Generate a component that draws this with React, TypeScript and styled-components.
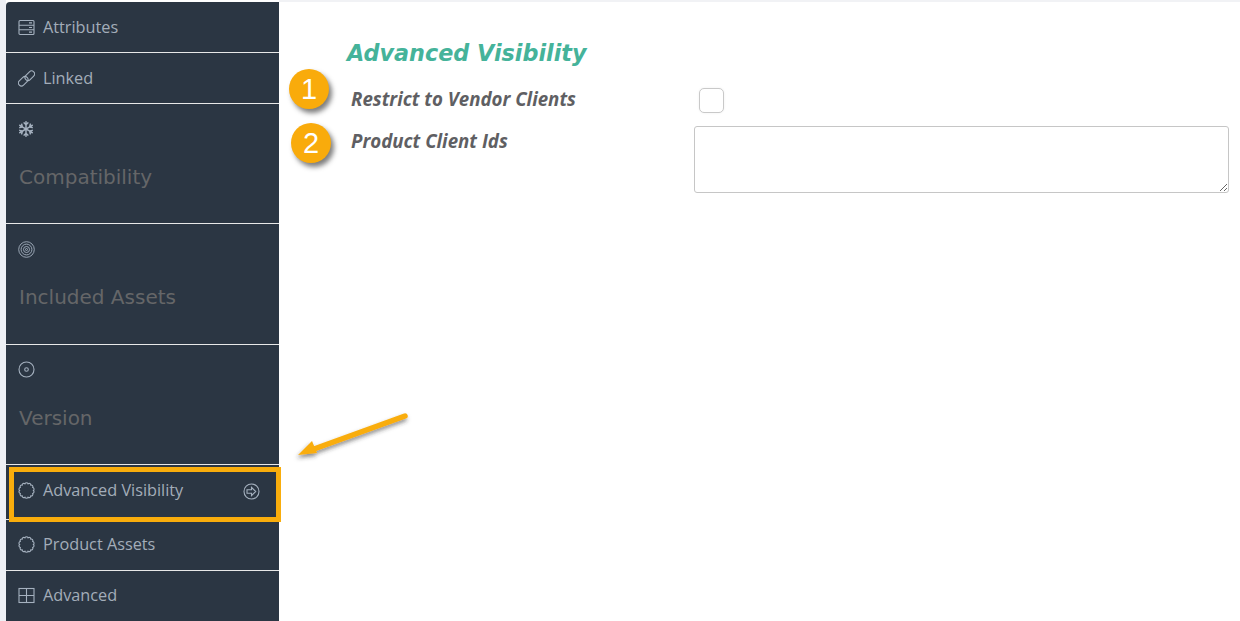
import * as React from "react";
import styled, { createGlobalStyle } from "styled-components";
import { FaRegSnowflake } from "react-icons/fa";

const GlobalStyle = createGlobalStyle`
  html, body {
    margin: 0;
    padding: 0;
    height: 100%;
    background: #fff;
  }
  #root {
    height: 100%;
  }
`;

const Page = styled.div`
  position: relative;
  display: flex;
  width: 1240px;
  height: 621px;
  overflow: hidden;
  background: #fff;
`;

const Gutter = styled.div`
  width: 6px;
  flex: none;
  background: #eef0f5;
`;

const Sidebar = styled.nav`
  width: 273px;
  flex: none;
  margin-top: 2px;
  display: flex;
  flex-direction: column;
  background: #2b3643;
  border-top-left-radius: 4px;
`;

const NavItem = styled.div<{ $height: number; $last?: boolean }>`
  height: ${(p) => p.$height}px;
  flex: none;
  box-sizing: border-box;
  padding: 0 12px 0 12px;
  border-bottom: ${(p) => (p.$last ? "none" : "1px solid #e8e8e8")};
`;

const NavRow = styled.div<{ $top: number }>`
  display: flex;
  align-items: center;
  height: 20px;
  padding-top: ${(p) => p.$top}px;
  color: #a5b1bf;
`;

const NavLabel = styled.span`
  margin-left: 8px;
  font-family: "Open Sans", sans-serif;
  font-size: 16.25px;
  line-height: 20px;
  color: #a3adb9;
  flex: 1;
`;

const DimLabel = styled.div<{ $top: number }>`
  margin-top: ${(p) => p.$top}px;
  margin-left: 1px;
  font-family: "DejaVu Sans", Verdana, sans-serif;
  font-size: 20px;
  line-height: 24px;
  color: #656668;
`;

const Main = styled.main`
  flex: 1;
  position: relative;
  border-top: 2px solid #f1f2f5;
  padding: 36px 11px 0 68px;
`;

const Heading = styled.h2`
  margin: 0;
  font-family: "DejaVu Sans", Verdana, sans-serif;
  font-size: 22.3px;
  line-height: 30px;
  font-style: italic;
  font-weight: 700;
  color: #45b39a;
`;

const FieldRow = styled.div<{ $top: number }>`
  display: flex;
  align-items: flex-start;
  margin-top: ${(p) => p.$top}px;
`;

const FieldLabel = styled.label<{ $top?: number }>`
  width: 343px;
  flex: none;
  margin-left: 4px;
  margin-top: ${(p) => p.$top ?? 0}px;
  font-family: "Open Sans", sans-serif;
  font-size: 18.7px;
  line-height: 24px;
  font-style: italic;
  font-weight: 700;
  color: #5f5f63;
`;

const CheckBox = styled.input.attrs({ type: "checkbox" })`
  appearance: none;
  width: 25px;
  height: 25px;
  margin: 1px 0 0 5px;
  box-sizing: border-box;
  border: 1px solid #c9c9c9;
  border-radius: 5px;
  background: #fff;
  box-shadow: 0 0 3px rgba(0, 0, 0, 0.06);
`;

const TextArea = styled.textarea`
  display: block;
  width: 535px;
  height: 67px;
  box-sizing: border-box;
  margin: 0;
  border: 1px solid #c6c6c6;
  border-radius: 3px;
  background: #fff;
  outline: none;
`;

const Highlight = styled.div`
  position: absolute;
  left: 9px;
  top: 467px;
  width: 272px;
  height: 55px;
  box-sizing: border-box;
  border: 5px solid #f9ad0c;
`;

const Badge = styled.div<{ $x: number; $y: number }>`
  position: absolute;
  left: ${(p) => p.$x}px;
  top: ${(p) => p.$y}px;
  width: 40px;
  height: 40px;
  border-radius: 50%;
  background: #f9ab0b;
  box-shadow: 3px 4px 5px rgba(40, 40, 40, 0.6);
  color: #fff;
  font-family: "Liberation Sans", Arial, sans-serif;
  font-size: 29px;
  line-height: 40px;
  text-align: center;
`;

const Arrow = styled.svg`
  position: absolute;
  left: 290px;
  top: 405px;
  overflow: visible;
`;

const Ico = styled.svg`
  width: 17px;
  height: 17px;
  flex: none;
  fill: none;
  stroke: #a5b1bf;
  stroke-width: 1.1;
`;

const ThinIco = styled(Ico)`
  stroke-width: 0.9;
`;

const ArrowIco = styled(Ico)`
  margin-right: 7px;
  margin-top: 2px;
`;

const Snow = styled(FaRegSnowflake)`
  width: 16px;
  height: 16px;
  flex: none;
  color: #a5b1bf;
`;

const ServerIcon = () => (
  <Ico viewBox="0 0 17 17">
    <rect x="1" y="1.5" width="15" height="14" rx="1" />
    <path d="M1 6.2h15M1 10.8h15M11 3.9h3M11 8.5h3M11 13.1h3" />
  </Ico>
);

const LinkIcon = () => (
  <Ico viewBox="0 0 17 17">
    <rect x="6.3" y="2.7" width="11" height="6" rx="3" transform="rotate(-45 11.8 5.7)" />
    <rect x="-0.3" y="8.3" width="11" height="6" rx="3" transform="rotate(-45 5.2 11.3)" />
  </Ico>
);

const TargetIcon = () => (
  <ThinIco viewBox="0 0 17 17">
    <circle cx="8.5" cy="8.5" r="7.8" />
    <circle cx="8.5" cy="8.5" r="5.4" />
    <circle cx="8.5" cy="8.5" r="3" />
    <circle cx="8.5" cy="8.5" r="1" />
  </ThinIco>
);

const DiscIcon = () => (
  <Ico viewBox="0 0 17 17">
    <circle cx="8.5" cy="8.5" r="7.5" />
    <circle cx="8.5" cy="8.5" r="1.8" />
  </Ico>
);

// scalloped circle, one small arc per lobe
const scallopPath = (() => {
  const lobes = 14;
  let d = "";
  for (let i = 0; i <= lobes; i++) {
    const a = (i / lobes) * Math.PI * 2;
    const x = (8.5 + 6.9 * Math.cos(a)).toFixed(2);
    const y = (8.5 + 6.9 * Math.sin(a)).toFixed(2);
    d += i === 0 ? `M${x} ${y}` : `A1.7 1.7 0 0 1 ${x} ${y}`;
  }
  return d + "z";
})();

const BadgeIcon = () => (
  <Ico viewBox="0 0 17 17">
    <path d={scallopPath} />
  </Ico>
);

const TableIcon = () => (
  <Ico viewBox="0 0 17 17">
    <rect x="1" y="1.5" width="15" height="14" />
    <path d="M1 8.5h15M8.5 1.5v14" />
  </Ico>
);

const CircleArrowIcon = () => (
  <ArrowIco viewBox="0 0 17 17">
    <circle cx="8.5" cy="8.5" r="7.5" />
    <path d="M4 6.8h4.5V4.4l4.2 4.1-4.2 4.1v-2.4H4z" />
  </ArrowIco>
);

const App = (): React.ReactElement => {
  return (
    <Page>
      <GlobalStyle />
      <Gutter />
      <Sidebar>
        <NavItem $height={51}>
          <NavRow $top={15}>
            <ServerIcon />
            <NavLabel>Attributes</NavLabel>
          </NavRow>
        </NavItem>
        <NavItem $height={51}>
          <NavRow $top={15}>
            <LinkIcon />
            <NavLabel>Linked</NavLabel>
          </NavRow>
        </NavItem>
        <NavItem $height={120}>
          <NavRow $top={15}>
            <Snow />
          </NavRow>
          <DimLabel $top={26}>Compatibility</DimLabel>
        </NavItem>
        <NavItem $height={121}>
          <NavRow $top={15}>
            <TargetIcon />
          </NavRow>
          <DimLabel $top={26}>Included Assets</DimLabel>
        </NavItem>
        <NavItem $height={120}>
          <NavRow $top={14}>
            <DiscIcon />
          </NavRow>
          <DimLabel $top={27}>Version</DimLabel>
        </NavItem>
        <NavItem $height={55}>
          <NavRow $top={15}>
            <BadgeIcon />
            <NavLabel>Advanced Visibility</NavLabel>
            <CircleArrowIcon />
          </NavRow>
        </NavItem>
        <NavItem $height={51}>
          <NavRow $top={14}>
            <BadgeIcon />
            <NavLabel>Product Assets</NavLabel>
          </NavRow>
        </NavItem>
        <NavItem $height={50} $last>
          <NavRow $top={14}>
            <TableIcon />
            <NavLabel>Advanced</NavLabel>
          </NavRow>
        </NavItem>
      </Sidebar>
      <Main>
        <Heading>Advanced Visibility</Heading>
        <FieldRow $top={19}>
          <FieldLabel>Restrict to Vendor Clients</FieldLabel>
          <CheckBox />
        </FieldRow>
        <FieldRow $top={13}>
          <FieldLabel $top={3}>Product Client Ids</FieldLabel>
          <TextArea />
        </FieldRow>
      </Main>
      <Highlight />
      <Badge $x={289} $y={69}>1</Badge>
      <Badge $x={291} $y={123}>2</Badge>
      <Arrow width="120" height="60" viewBox="0 0 120 60">
        <defs>
          <filter id="arrowShadow" x="-20%" y="-40%" width="140%" height="200%">
            <feDropShadow dx="-1" dy="3" stdDeviation="2" floodColor="#333" floodOpacity="0.55" />
          </filter>
        </defs>
        <g filter="url(#arrowShadow)">
          <path d="M115 11 24 44" stroke="#f9ad0c" strokeWidth="5.5" strokeLinecap="round" />
          <path d="M8 50 22 36 27 48z" fill="#f9ad0c" />
        </g>
      </Arrow>
    </Page>
  );
};

export default App;
